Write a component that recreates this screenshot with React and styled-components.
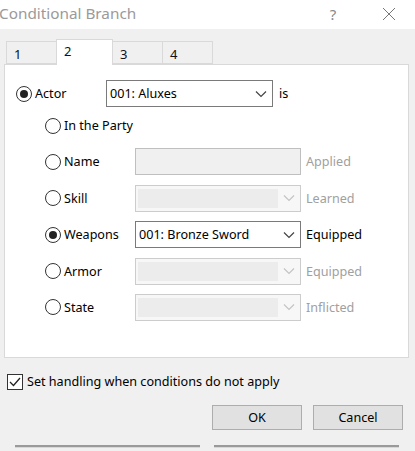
import React from "react";
import styled, { createGlobalStyle } from "styled-components";

const Global = createGlobalStyle`
  html, body { margin: 0; padding: 0; background: #f0f0f0; }
  body { font-family: "Noto Sans", "Open Sans", sans-serif; color: #000; }
  #root { width: 415px; height: 451px; overflow: hidden; }
`;

const Window = styled.div`
  width: 415px;
  height: 451px;
  display: flex;
  flex-direction: column;
  background: #f0f0f0;
`;

const TitleBar = styled.div`
  height: 29px;
  background: #fff;
  display: flex;
  align-items: center;
  padding-right: 12px;
`;

const Title = styled.div`
  flex: 1;
  font-size: 15.3px;
  color: #9a9a9a;
  margin-left: -1px;
  margin-top: -3px;
`;

const TitleButton = styled.div`
  width: ${(p) => p.$w}px;
  margin-right: ${(p) => p.$mr ?? 0}px;
  display: flex;
  justify-content: center;
  align-items: center;
  color: #888;
  font-size: 15px;
  margin-top: -2px;
`;

const Body = styled.div`
  padding: 10px 6px 0 4px;
  display: flex;
  flex-direction: column;
`;

const Tabs = styled.div`
  display: flex;
  align-items: flex-end;
  height: 25px;
  padding-left: 2px;
  position: relative;
  z-index: 1;
`;

const Tab = styled.div`
  box-sizing: border-box;
  width: ${(p) => p.$w}px;
  height: ${(p) => (p.$active ? 26 : 23)}px;
  margin-bottom: ${(p) => (p.$active ? -1 : 0)}px;
  background: ${(p) => (p.$active ? "#fff" : "#f0f0f0")};
  border: 1px solid #d9d9d9;
  border-bottom: ${(p) => (p.$active ? "none" : "1px solid #d9d9d9")};
  margin-left: ${(p) => (p.$first ? 0 : -1)}px;
  font-size: 13px;
  padding: ${(p) => (p.$active ? "2px 0 0 7px" : "3px 0 0 7px")};
  color: #111;
`;

const Panel = styled.div`
  box-sizing: border-box;
  height: 294px;
  background: #fff;
  border: 1px solid #d9d9d9;
  padding: 15px 0 0 11px;
  display: flex;
  flex-direction: column;
`;

const Row = styled.div`
  display: flex;
  align-items: center;
  height: 27px;
`;

const SubRows = styled.div`
  display: flex;
  flex-direction: column;
  gap: 9.4px;
  padding-top: 5px;
  padding-left: 29px;
`;

const RadioLabel = styled.label`
  display: flex;
  align-items: center;
  width: ${(p) => p.$w}px;
  white-space: nowrap;
  font-size: 12.6px;
  color: #000;
  gap: 3px;
  flex: none;
`;

const RadioCircle = styled.span`
  box-sizing: border-box;
  width: 16px;
  height: 16px;
  border-radius: 50%;
  border: 1px solid #333;
  background: #fff;
  display: flex;
  align-items: center;
  justify-content: center;
  flex: none;
  &::after {
    content: "";
    width: 8px;
    height: 8px;
    border-radius: 50%;
    background: ${(p) => (p.$on ? "#222" : "transparent")};
  }
`;

const Field = styled.div`
  box-sizing: border-box;
  width: ${(p) => p.$w}px;
  height: 27px;
  display: flex;
  align-items: center;
  border: 1px solid ${(p) => (p.$disabled ? "#cccccc" : "#7a7a7a")};
  background: ${(p) => (p.$disabled ? "#f7f7f7" : "#fff")};
  font-size: 12.6px;
  color: #000;
  padding-left: ${(p) => (p.$disabled ? 4 : 5)}px;
  flex: none;
`;

const TextField = styled(Field)`
  border-color: #bfbfbf;
  background: #f0f0f0;
`;

const ComboFill = styled.div`
  flex: 1;
  align-self: stretch;
  margin: 3px 0 3px -2px;
  background: ${(p) => (p.$disabled ? "#ececec" : "transparent")};
  display: flex;
  align-items: center;
`;

const Arrow = styled.div`
  width: 22px;
  display: flex;
  justify-content: center;
  align-items: center;
  color: ${(p) => (p.$disabled ? "#c4c4c4" : "#444")};
`;

const Suffix = styled.span`
  font-size: 12.6px;
  margin-left: ${(p) => p.$ml ?? 5}px;
  color: ${(p) => (p.$disabled ? "#a0a0a0" : "#000")};
`;

const CheckRow = styled.label`
  display: flex;
  align-items: center;
  margin: 15px 0 0 3px;
  font-size: 12.6px;
  gap: 4px;
`;

const CheckBox = styled.span`
  box-sizing: border-box;
  width: 16px;
  height: 16px;
  border: 1px solid #333;
  background: #fff;
  display: flex;
  align-items: center;
  justify-content: center;
`;

const ButtonRow = styled.div`
  display: flex;
  justify-content: flex-end;
  gap: 11px;
  margin-top: 15px;
  padding-right: 6px;
`;

const Button = styled.button`
  box-sizing: border-box;
  width: 90px;
  height: 25px;
  background: #e1e1e1;
  border: 1px solid #adadad;
  font-family: inherit;
  font-size: 12.6px;
  color: #000;
  padding: 0;
`;

const Shadows = styled.div`
  display: flex;
  gap: 14px;
  padding-left: 11px;
  margin-top: 15px;
`;

const ShadowBar = styled.div`
  width: 185px;
  height: 2px;
  background: #9a9a9a;
  border-bottom: 1px solid #d8d8d8;
`;

const Chevron = () => (
  <svg width="12" height="8" viewBox="0 0 12 8">
    <path d="M1 1.5 L6 6.5 L11 1.5" fill="none" stroke="currentColor" strokeWidth="1.2" />
  </svg>
);

const Combo = ({ w, value, disabled }) => (
  <Field $w={w} $disabled={disabled}>
    <ComboFill $disabled={disabled}>{value}</ComboFill>
    <Arrow $disabled={disabled}>
      <Chevron />
    </Arrow>
  </Field>
);

const Radio = ({ on, label, w }) => (
  <RadioLabel $w={w}>
    <RadioCircle $on={on} />
    {label}
  </RadioLabel>
);

const subjects = [
  { label: "Name", kind: "text", suffix: "Applied" },
  { label: "Skill", kind: "combo", suffix: "Learned" },
  { label: "Weapons", kind: "combo", value: "001: Bronze Sword", suffix: "Equipped", on: true },
  { label: "Armor", kind: "combo", suffix: "Equipped" },
  { label: "State", kind: "combo", suffix: "Inflicted" },
];

export default function App() {
  return (
    <Window>
      <Global />
      <TitleBar>
        <Title>Conditional Branch</Title>
        <TitleButton $w={20} $mr={32}>?</TitleButton>
        <TitleButton $w={28}>
          <svg width="14" height="14" viewBox="0 0 14 14">
            <path d="M1 1 L13 13 M13 1 L1 13" stroke="#777" strokeWidth="1" />
          </svg>
        </TitleButton>
      </TitleBar>
      <Body>
        <Tabs>
          <Tab $w={51} $first>1</Tab>
          <Tab $w={57} $active>2</Tab>
          <Tab $w={51}>3</Tab>
          <Tab $w={51}>4</Tab>
        </Tabs>
        <Panel>
          <Row>
            <Radio on label="Actor" w={90} />
            <Combo w={167} value="001: Aluxes" />
            <Suffix $ml={6}>is</Suffix>
          </Row>
          <SubRows>
            <Row>
              <Radio label="In the Party" w={90} />
            </Row>
            {subjects.map((s) => (
              <Row key={s.label}>
                <Radio on={s.on} label={s.label} w={90} />
                {s.kind === "text" ? (
                  <TextField $w={166} $disabled />
                ) : (
                  <Combo w={166} value={s.value} disabled={!s.on} />
                )}
                <Suffix $disabled={!s.on}>{s.suffix}</Suffix>
              </Row>
            ))}
          </SubRows>
        </Panel>
        <CheckRow>
          <CheckBox>
            <svg width="12" height="10" viewBox="0 0 12 10">
              <path d="M1 5 L4.5 8.5 L11 1" fill="none" stroke="#222" strokeWidth="1.3" />
            </svg>
          </CheckBox>
          Set handling when conditions do not apply
        </CheckRow>
        <ButtonRow>
          <Button>OK</Button>
          <Button>Cancel</Button>
        </ButtonRow>
        <Shadows>
          <ShadowBar />
          <ShadowBar />
        </Shadows>
      </Body>
    </Window>
  );
}
